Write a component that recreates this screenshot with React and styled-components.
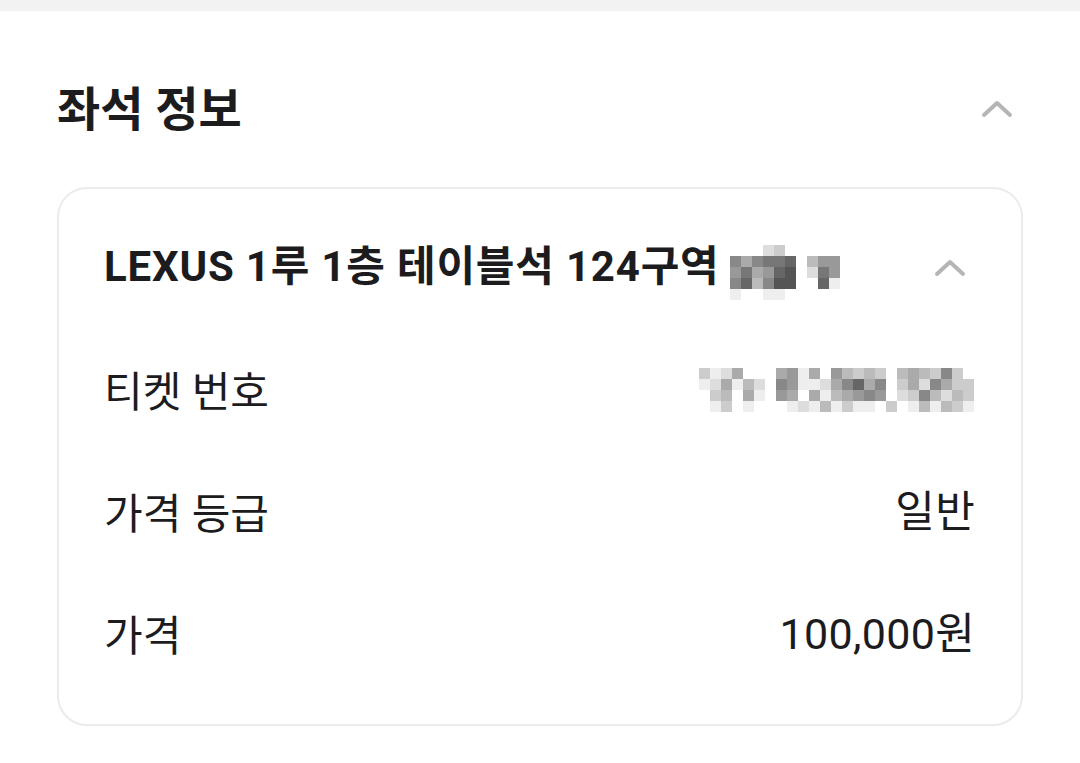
import React from 'react';
import styled, { createGlobalStyle } from 'styled-components';

const GlobalStyle = createGlobalStyle`
  body {
    margin: 0;
    background: #fff;
    font-family: Roboto, "Noto Sans CJK KR", sans-serif;
    color: #1c1c1e;
  }
`;

const TopBar = styled.div`
  height: 11px;
  background: #f2f2f2;
`;

const Section = styled.section`
  padding: 0 57px;
`;

const Header = styled.div`
  display: flex;
  align-items: center;
  justify-content: space-between;
  height: 100px;
  margin-top: 48px;
`;

const Heading = styled.h2`
  margin: 0;
  font-size: 47px;
  font-weight: 700;
  line-height: 1;
`;

const Chevron = styled.svg`
  display: block;
  width: 32px;
  height: 20px;
  margin-right: ${(p) => p.$offset}px;
  margin-top: ${(p) => p.$top || 0}px;
  flex: none;
`;

const Card = styled.div`
  margin-top: 28px;
  border: 2px solid #ebebee;
  border-radius: 30px;
  padding: 40px 46px 26px 45px;
`;

const TitleRow = styled.div`
  display: flex;
  align-items: center;
  justify-content: space-between;
  height: 72px;
  margin-bottom: 31px;
`;

const TitleWrap = styled.div`
  display: flex;
  align-items: center;
  margin-top: 3px;
`;

const Title = styled.h3`
  margin: 0;
  font-size: 42px;
  font-weight: 700;
  line-height: 1;
  letter-spacing: 0.8px;
`;

const Row = styled.div`
  display: flex;
  align-items: center;
  justify-content: space-between;
  height: 122px;
`;

const Label = styled.span`
  font-size: 42px;
  line-height: 1;
`;

const Value = styled.span`
  font-size: 43px;
  line-height: 1;
  margin-top: -6px;
  letter-spacing: 0.3px;
`;

const Mosaic = styled.div`
  display: grid;
  grid-template-columns: repeat(${(p) => p.$cols}, ${(p) => p.$cell}px);
  grid-auto-rows: ${(p) => p.$rowH}px;
  margin-left: ${(p) => p.$ml || 0}px;
  margin-right: ${(p) => p.$mr || 0}px;
  margin-top: ${(p) => p.$mt || 0}px;
`;

const Cell = styled.div`
  background: ${(p) => p.$c};
`;

const ChevronUp = ({ offset, top }) => (
  <Chevron viewBox="0 0 32 20" $offset={offset} $top={top}>
    <polyline
      points="3,16 16,4 29,16"
      fill="none"
      stroke="#b5b5b5"
      strokeWidth="4"
      strokeLinecap="round"
      strokeLinejoin="round"
    />
  </Chevron>
);

const gray = (h) => (h === 'f' ? '#fff' : `#${h}${h}${h}`);

const PixelBlock = ({ rows, cell, rowH, ml, mr, mt }) => (
  <Mosaic $cols={rows[0].length} $cell={cell} $rowH={rowH} $ml={ml} $mr={mr} $mt={mt}>
    {rows.map((r, i) => r.split('').map((h, j) => <Cell key={`${i}-${j}`} $c={gray(h)} />))}
  </Mosaic>
);

const titleBlurA = ['fffdcf', '8a8776', '97a965', '86b855', 'effeef'];
const titleBlurB = ['fff', 'b99', 'd79', 'f6e', 'fff'];

const ticketBlur = [
  'cedafffa9eaf9bcbcfbabc8cff',
  'edaebdf89eeda86a8fcad8accf',
  'fcbfaef9afaeba989fdc8bdbcf',
  'fecfefffedebeceefcfebebcef',
];

const rows = [
  { label: '가격 등급', value: '일반' },
  { label: '가격', value: '100,000원' },
];

export default function App() {
  return (
    <>
      <GlobalStyle />
      <TopBar />
      <Section>
        <Header>
          <Heading>좌석 정보</Heading>
          <ChevronUp offset={10} />
        </Header>
        <Card>
          <TitleRow>
            <TitleWrap>
              <Title>LEXUS 1루 1층 테이블석 124구역</Title>
              <PixelBlock rows={titleBlurA} cell={11} rowH={11} ml={10} mt={12} />
              <PixelBlock rows={titleBlurB} cell={11} rowH={11} ml={11} mt={12} />
            </TitleWrap>
            <ChevronUp offset={9} top={6} />
          </TitleRow>
          <Row>
            <Label>티켓 번호</Label>
            <PixelBlock rows={ticketBlur} cell={11} rowH={11} mt={-6} mr={-10} />
          </Row>
          {rows.map((r) => (
            <Row key={r.label}>
              <Label>{r.label}</Label>
              <Value>{r.value}</Value>
            </Row>
          ))}
        </Card>
      </Section>
    </>
  );
}
